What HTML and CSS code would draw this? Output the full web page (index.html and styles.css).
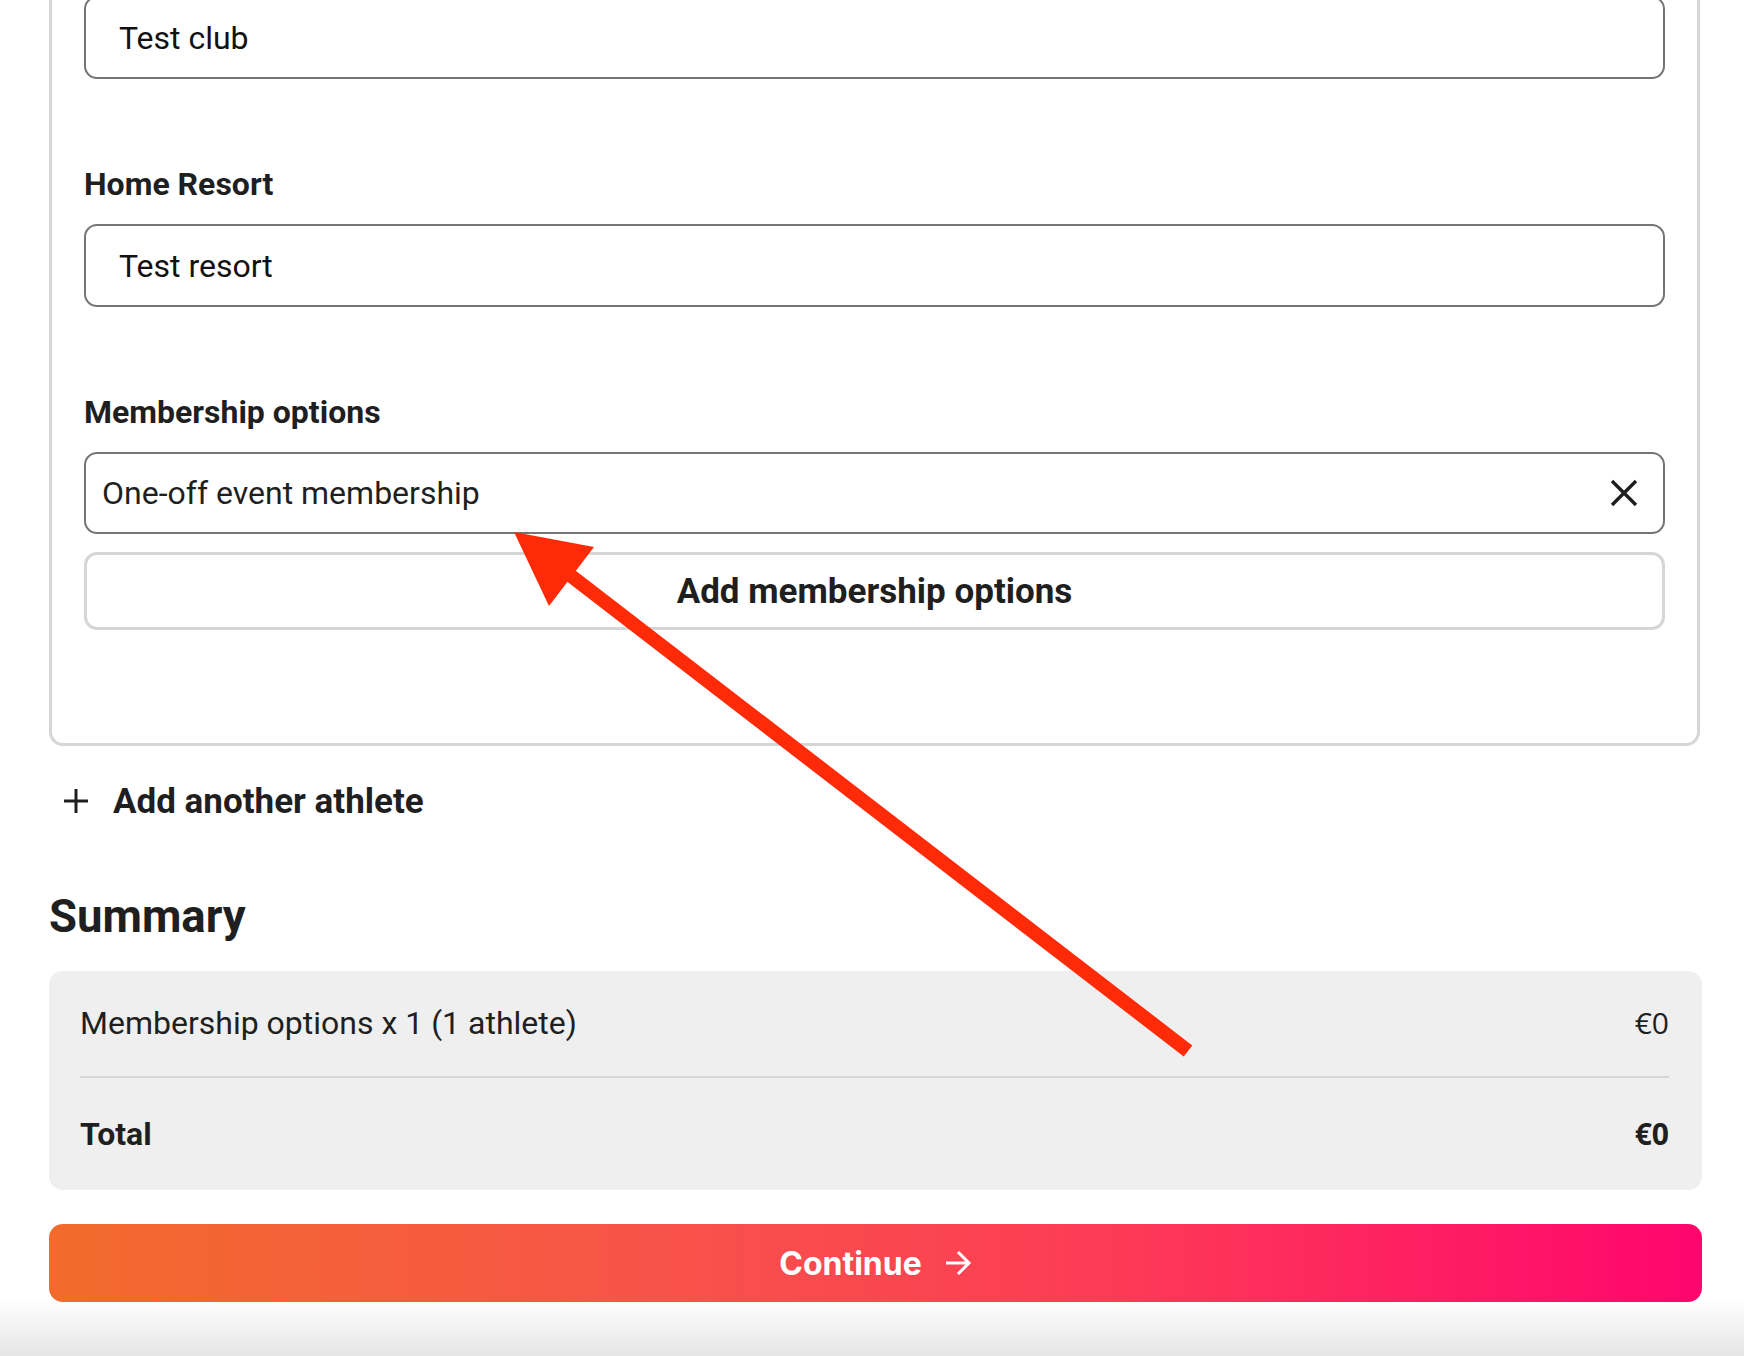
FILE: index.html
```html
<!DOCTYPE html>
<html lang="en">
<head>
    <meta charset="UTF-8">
    <meta name="viewport" content="width=device-width, initial-scale=1.0">
    <title>Athlete registration</title>
    <link rel="stylesheet" href="styles.css">
</head>
<body>
    <div class="page">
        <!-- Athlete card (top part scrolled out of view) -->
        <div class="athlete-card">
            <div class="field">
                <label class="field-label">Home Club</label>
                <input class="text-input" type="text" value="Test club">
            </div>
            <div class="field">
                <label class="field-label">Home Resort</label>
                <input class="text-input" type="text" value="Test resort">
            </div>
            <div class="field">
                <label class="field-label">Membership options</label>
                <div class="chosen-option">
                    <span>One-off event membership</span>
                    <button class="clear-btn" aria-label="Remove">
                        <svg width="28" height="28" viewBox="0 0 28 28"><path d="M2 2 L26 26 M26 2 L2 26" stroke="#1f1f1f" stroke-width="3.4" fill="none"/></svg>
                    </button>
                </div>
                <button class="outline-btn">Add membership options</button>
            </div>
        </div>

        <button class="add-athlete">
            <svg width="26" height="26" viewBox="0 0 26 26"><path d="M13 1 V25 M1 13 H25" stroke="#1f1f1f" stroke-width="3" fill="none"/></svg>
            <span>Add another athlete</span>
        </button>

        <h2 class="summary-title">Summary</h2>
        <div class="summary-box">
            <div class="summary-row">
                <span>Membership options x 1 (1 athlete)</span>
                <span class="amount">€0</span>
            </div>
            <div class="summary-row total">
                <span>Total</span>
                <span class="amount">€0</span>
            </div>
        </div>

        <button class="continue-btn">
            <span>Continue</span>
            <svg width="28" height="28" viewBox="0 0 28 28"><path d="M2 14 H25 M14 3 L25 14 L14 25" stroke="#fff" stroke-width="3" fill="none"/></svg>
        </button>
    </div>
    <div class="footer-shade"></div>

    <!-- Red annotation arrow drawn over the form -->
    <svg class="annotation" width="1744" height="1356" viewBox="0 0 1744 1356">
        <line x1="1188" y1="1051" x2="566" y2="572" stroke="#ff2a08" stroke-width="14"/>
        <polygon points="514,532 594,547 549,606" fill="#ff2a08"/>
    </svg>
</body>
</html>
```

FILE: styles.css
```css
body {
    margin: 0;
    background-color: #fff;
    font-family: Roboto, "Liberation Sans", sans-serif;
    color: #1f1f1f;
    overflow: hidden;
}
.page {
    width: 1653px;
    margin-left: 49px;
}
.athlete-card {
    margin-top: -97px;
    margin-right: 2px;
    padding: 32px 32px 113px;
    border: 3px solid #d6d6d6;
    border-radius: 14px;
}
.field + .field {
    margin-top: 87px;
}
.field-label {
    display: block;
    font-size: 32px;
    font-weight: 700;
    line-height: 36px;
    margin-bottom: 22px;
}
.text-input {
    display: block;
    width: 100%;
    height: 83px;
    box-sizing: border-box;
    padding: 0 33px;
    border: 2px solid #757575;
    border-radius: 13px;
    font-family: Roboto, "Liberation Sans", sans-serif;
    font-size: 32px;
    color: #111;
    background: #fff;
    outline: none;
}
.chosen-option {
    display: flex;
    align-items: center;
    justify-content: space-between;
    height: 82px;
    box-sizing: border-box;
    padding: 0 25px 0 16px;
    border: 2px solid #757575;
    border-radius: 13px;
    font-size: 32px;
    color: #1f1f1f;
}
.clear-btn {
    display: flex;
    padding: 0;
    border: none;
    background: none;
}
.outline-btn {
    display: block;
    width: 100%;
    height: 78px;
    margin-top: 18px;
    border: 3px solid #d6d6d6;
    border-radius: 13px;
    background: #fff;
    font-family: Roboto, "Liberation Sans", sans-serif;
    font-size: 35px;
    font-weight: 700;
    color: #1f1f1f;
}
.add-athlete {
    display: flex;
    align-items: center;
    gap: 24px;
    margin-top: 35px;
    padding: 0 0 0 14px;
    height: 40px;
    border: none;
    background: none;
    font-family: Roboto, "Liberation Sans", sans-serif;
    font-size: 35px;
    font-weight: 700;
    color: #1f1f1f;
}
.summary-title {
    margin: 70px 0 28px;
    font-size: 45.5px;
    line-height: 52px;
    font-weight: 700;
}
.summary-box {
    padding: 0 33px 0 31px;
    background-color: #efefef;
    border-radius: 14px;
}
.summary-row {
    display: flex;
    justify-content: space-between;
    align-items: center;
    padding: 32px 0 33px;
    line-height: 40px;
    font-size: 32px;
}
.summary-row.total {
    padding: 36px 0;
    border-top: 2px solid #d6d6d6;
    font-weight: 700;
}
.amount {
    font-family: "Open Sans", sans-serif;
    font-size: 30px;
}
.continue-btn {
    display: flex;
    align-items: center;
    justify-content: center;
    gap: 22px;
    width: 100%;
    height: 78px;
    margin-top: 34px;
    border: none;
    border-radius: 14px;
    background: linear-gradient(90deg, #f26b2c 0%, #f8524a 38%, #fd3a56 65%, #ff056e 100%);
    font-family: Inter, Roboto, sans-serif;
    font-size: 32px;
    font-weight: 700;
    color: #fff;
}
.footer-shade {
    height: 54px;
    background: linear-gradient(180deg, #fdfdfd, #e6e6e6);
}
.annotation {
    position: absolute;
    top: 0;
    left: 0;
    pointer-events: none;
}
```
